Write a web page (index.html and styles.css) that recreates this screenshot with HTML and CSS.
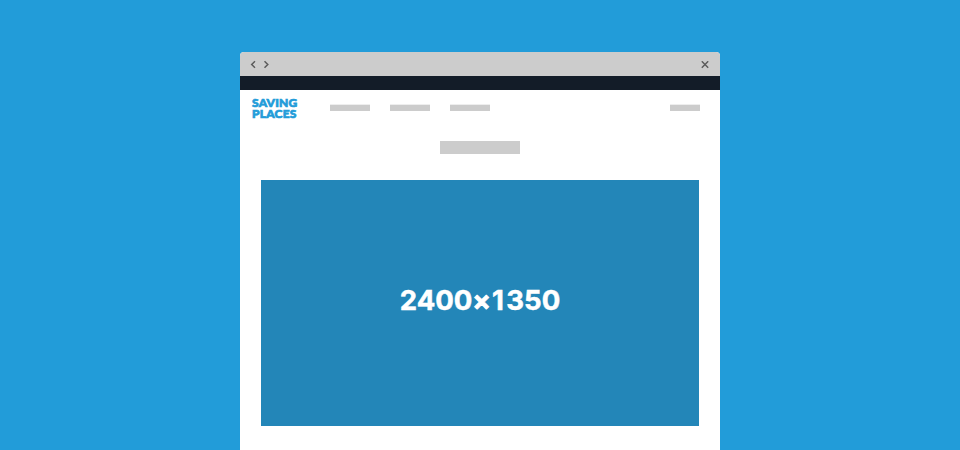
FILE: index.html
```
<!DOCTYPE html>
<html lang="en">
<head>
<meta charset="utf-8">
<title>Saving Places</title>
<link rel="stylesheet" href="styles.css">
</head>
<body>
<div class="window">
  <div class="titlebar">
    <svg class="arrows" width="20" height="9" viewBox="0 0 20 9"><path d="M5 1.2 1.7 4.5 5 7.8M14.5 1.2l3.3 3.3-3.3 3.3"/></svg>
    <svg class="close" width="8" height="8" viewBox="0 0 8 8"><path d="m.8.3 6.4 6.4M7.2.3.8 6.7"/></svg>
  </div>
  <div class="topbar"></div>
  <header class="header">
    <div class="logo">SAVING<br>PLACES</div>
    <nav class="nav"><span class="link"></span><span class="link"></span><span class="link"></span></nav>
    <span class="action"></span>
  </header>
  <div class="heading"></div>
  <main class="hero"><div class="size">2400<span class="times">×</span><span class="one">1</span>350</div></main>
</div>
</body>
</html>
```
FILE: styles.css
```
* { box-sizing: border-box; }
body {
  margin: 0;
  height: 450px;
  padding-top: 52px;
  overflow: hidden;
  background: #229cd9;
  font-family: Lato, sans-serif;
}
.window {
  width: 480px;
  height: 398px;
  margin: 0 auto;
  background: #fff;
  border-radius: 4px 4px 0 0;
  overflow: hidden;
}
.titlebar {
  height: 24px;
  display: flex;
  align-items: center;
  justify-content: space-between;
  padding: 1px 11px 0 10px;
  background: #ccc;
}
svg { fill: none; stroke: #5c5c5c; stroke-width: 1.5; }
.topbar { height: 14px; background: #131c28; }
.header {
  height: 51px;
  display: flex;
  align-items: flex-start;
  padding: 7px 20px 0 12px;
}
.logo {
  width: 78px;
  color: #229cd9;
  font-size: 12px;
  font-weight: 900;
  line-height: 11px;
  letter-spacing: 0.2px;
  -webkit-text-stroke: 0.7px #229cd9;
}
.nav { display: flex; gap: 20px; padding-top: 7px; }
.link, .action {
  height: 7px;
  background: #ccc;
  border-top: 1px solid #eee;
}
.link { width: 40px; }
.action { width: 30px; margin: 7px 0 0 auto; }
.heading { width: 80px; height: 13px; margin: 0 auto 26px; background: #ccc; }
.hero {
  width: 438px;
  height: 246px;
  margin: 0 auto;
  padding-bottom: 6px;
  display: flex;
  align-items: center;
  justify-content: center;
  background: #2386b8;
}
.size {
  color: #fff;
  font-family: Inter, sans-serif;
  font-size: 27.5px;
  font-weight: 700;
  line-height: 36px;
  letter-spacing: 0;
  font-feature-settings: "calt" 0;
  -webkit-text-stroke: 0.5px #fff;
}
.times { margin-right: 1px; -webkit-text-stroke-width: 0.8px; }
.one { margin-right: 2.5px; }
```
